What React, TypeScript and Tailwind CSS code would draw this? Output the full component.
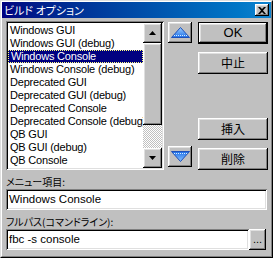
const items = [
  "Windows GUI",
  "Windows GUI (debug)",
  "Windows Console",
  "Windows Console (debug)",
  "Deprecated GUI",
  "Deprecated GUI (debug)",
  "Deprecated Console",
  "Deprecated Console (debug)",
  "QB GUI",
  "QB GUI (debug)",
  "QB Console",
  "QB Console (debug)",
];

const ui = "font-['Liberation_Sans',Arial,sans-serif]";
const jp = "font-['Noto_Sans_CJK_JP',sans-serif] [font-feature-settings:'palt']";
const raised =
  "bg-[#c0c0c0] shadow-[inset_-1px_-1px_#000,inset_1px_1px_#fff,inset_-2px_-2px_#808080,inset_2px_2px_#dfdfdf]";
const sunken =
  "bg-white shadow-[inset_1px_1px_#808080,inset_-1px_-1px_#fff,inset_2px_2px_#000,inset_-2px_-2px_#dfdfdf]";

function BlueArrow({ down }: { down?: boolean }) {
  return (
    <svg width="19" height="11" viewBox="0 0 19 11">
      <defs>
        <linearGradient id={down ? "gd" : "gu"} x1="0" y1="0" x2="0" y2="1">
          <stop offset="0" stopColor={down ? "#1c6fe8" : "#9fd0ff"} />
          <stop offset="1" stopColor={down ? "#8cc4ff" : "#1c6fe8"} />
        </linearGradient>
      </defs>
      {down ? (
        <>
          <polygon points="0.5,0.5 18.5,0.5 9.5,10.5" fill="url(#gd)" stroke="#1d4fb8" />
          <line x1="3" y1="2.5" x2="16" y2="2.5" stroke="#d8ecff" strokeDasharray="1 1" />
        </>
      ) : (
        <>
          <polygon points="9.5,0.5 18.5,10.5 0.5,10.5" fill="url(#gu)" stroke="#1d4fb8" />
          <line x1="3" y1="8.5" x2="16" y2="8.5" stroke="#d8ecff" strokeDasharray="1 1" />
        </>
      )}
    </svg>
  );
}

function Button({ label, def }: { label: string; def?: boolean }) {
  const inner = (
    <div className={`h-full w-full flex items-center justify-center ${raised}`}>
      <span className={label === "OK" ? `${ui} text-[13px]` : `${jp} text-[12px]`}>{label}</span>
    </div>
  );
  return def ? (
    <div className="h-[22px] w-[70px] border border-black">{inner}</div>
  ) : (
    <div className="h-[22px] w-[70px]">{inner}</div>
  );
}

export default function App() {
  return (
    <div className="w-[273px] h-[258px] bg-[#c0c0c0] border border-t-[#dfdfdf] border-l-[#dfdfdf] border-b-black border-r-black text-black">
      <div className="h-full flex flex-col border border-t-white border-l-white border-b-[#808080] border-r-[#808080]">
        {/* title */}
        <div className="h-[16px] flex items-center justify-between bg-linear-to-r from-[#000080] to-[#1084d0] pl-[2px] pr-[2px]">
          <span className={`${jp} text-[11px] leading-none text-white`}>ビルド オプション</span>
          <div className={`w-[14px] h-[12px] flex items-center justify-center ${raised}`}>
            <svg width="8" height="7" viewBox="0 0 8 7">
              <path d="M0 0h2l2 2 2-2h2L5 3.5 8 7H6L4 5 2 7H0l3-3.5z" fill="#000" />
            </svg>
          </div>
        </div>

        <div className="flex flex-col pl-[4px] pr-[2px] pt-[3px]">
          <div className="flex h-[149px]">
            {/* list */}
            <div className={`w-[158px] h-full p-[2px] flex ${sunken}`}>
              <div className="flex-1 overflow-hidden pt-[1px]">
                {items.map((it) => (
                  <div
                    key={it}
                    className={`h-[13px] flex items-center pl-[2px] whitespace-nowrap leading-none text-[11px] tracking-[-0.2px] ${ui} ${
                      it === "Windows Console"
                        ? "bg-[#000080] text-white border border-dotted border-[#ffff80] pl-[1px]"
                        : ""
                    }`}
                  >
                    {it}
                  </div>
                ))}
              </div>
              <div className="w-[19px] flex flex-col">
                <div className={`h-[20px] flex items-center justify-center ${raised}`}>
                  <svg width="7" height="4" viewBox="0 0 7 4">
                    <polygon points="3.5,0 7,4 0,4" fill="#000" />
                  </svg>
                </div>
                <div className={`h-[82px] ${raised}`} />
                <div className="flex-1 bg-[repeating-conic-gradient(#fff_0_25%,#c0c0c0_0_50%)] bg-size-[2px_2px]" />
                <div className={`h-[20px] flex items-center justify-center ${raised}`}>
                  <svg width="7" height="4" viewBox="0 0 7 4">
                    <polygon points="0,0 7,0 3.5,4" fill="#000" />
                  </svg>
                </div>
              </div>
            </div>

            {/* move buttons */}
            <div className="ml-[4px] w-[24px] flex flex-col justify-between pt-[1px] pb-[3px]">
              <div className={`h-[21px] flex items-center justify-center ${raised}`}>
                <BlueArrow />
              </div>
              <div className={`h-[21px] flex items-center justify-center ${raised}`}>
                <BlueArrow down />
              </div>
            </div>

            {/* actions */}
            <div className="ml-[6px] flex flex-col justify-between pt-[1px]">
              <div className="flex flex-col gap-[8px]">
                <Button label="OK" def />
                <Button label="中止" />
              </div>
              <div className="flex flex-col gap-[8px]">
                <Button label="挿入" />
                <Button label="削除" />
              </div>
            </div>
          </div>

          <div className="h-[19px] flex items-end">
            <span className={`${jp} text-[10px] leading-[15px]`}>メニュー項目:</span>
          </div>
          <div className={`h-[21px] w-[261px] flex items-center pl-[3px] ${sunken}`}>
            <span className={`${ui} text-[11.5px]`}>Windows Console</span>
          </div>

          <div className="h-[19px] flex items-end">
            <span className={`${jp} text-[10px] leading-[15px]`}>フルパス(コマンドライン):</span>
          </div>
          <div className="flex h-[21px]">
            <div className={`w-[243px] h-full flex items-center pl-[3px] ${sunken}`}>
              <span className={`${ui} text-[11.5px]`}>fbc -s console</span>
            </div>
            <div className={`w-[17px] h-full flex items-end justify-center pb-[5px] ${raised}`}>
              <span className={`${ui} text-[11px] leading-none`}>...</span>
            </div>
          </div>
        </div>
      </div>
    </div>
  );
}
